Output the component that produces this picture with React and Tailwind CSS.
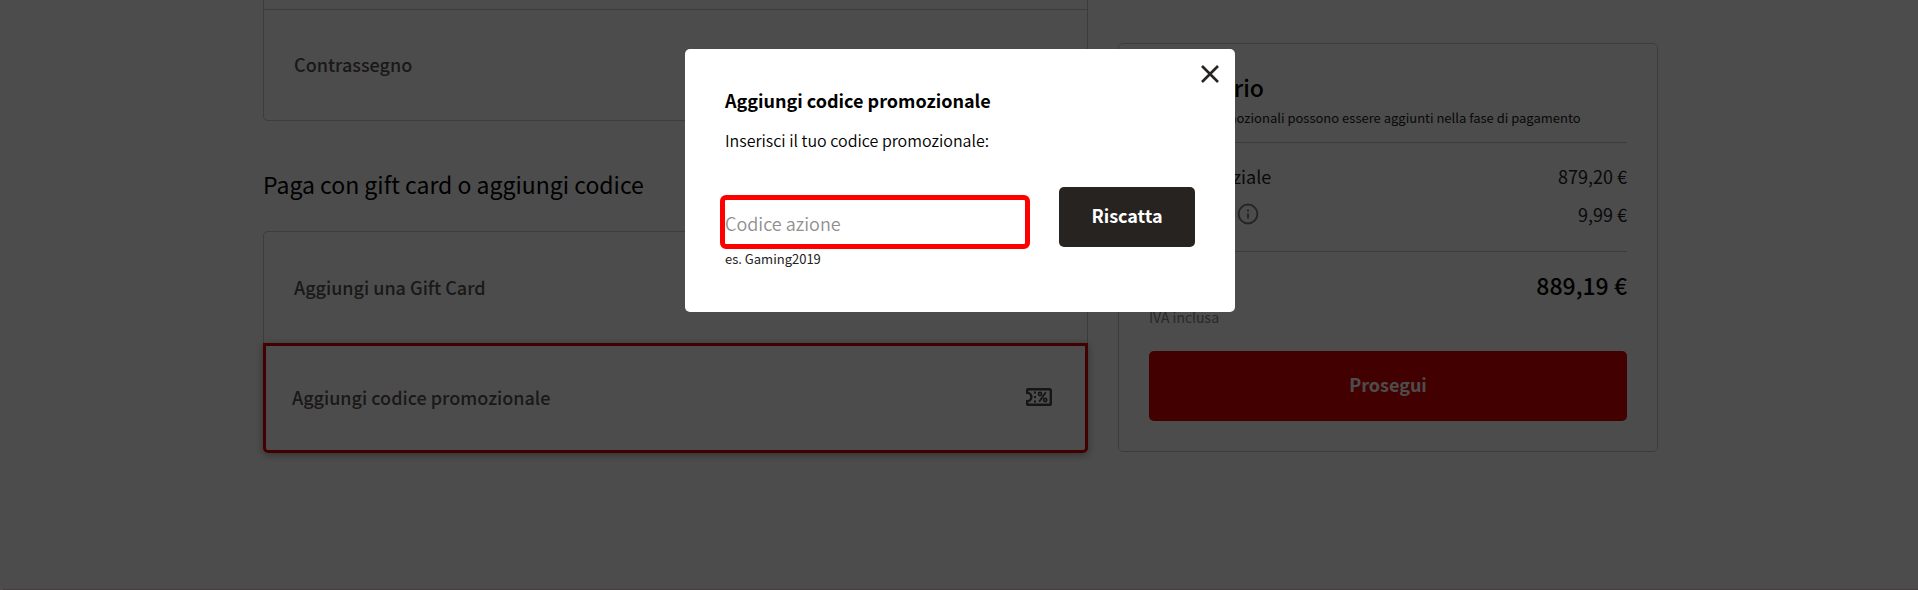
import { useState } from "react"

function TicketIcon() {
  return (
    <svg width="26" height="18" viewBox="0 0 26 18" fill="none" stroke="#4a4643" strokeWidth="2.4">
      <path d="M2 1.2h21.4a1.4 1.4 0 0 1 1.4 1.4v12.8a1.4 1.4 0 0 1-1.4 1.4H2a.8.8 0 0 1-.8-.8v-2.8a4.2 4.2 0 0 0 0-8.4V2a.8.8 0 0 1 .8-.8z" />
      <path d="M9 3.4v2.2M9 7.9v2.2M9 12.4v2.2" strokeWidth="2" />
      <path d="M19.8 4.2l-6.6 9.6" strokeWidth="1.8" />
      <circle cx="14" cy="6" r="1.6" strokeWidth="1.6" />
      <circle cx="19.2" cy="12" r="1.6" strokeWidth="1.6" />
    </svg>
  )
}

function InfoIcon() {
  return (
    <svg width="22" height="22" viewBox="0 0 22 22" fill="none" stroke="#7c7c7c" strokeWidth="2">
      <circle cx="11" cy="11" r="9.4" />
      <path d="M11 6.5v2M11 10.5v5" />
    </svg>
  )
}

function SummaryRow({ label, value }) {
  return (
    <div className="flex h-[38px] items-center justify-between text-lg leading-6 text-[#222]">
      <dt className="flex items-center gap-[5px]">{label}</dt>
      <dd>{value}</dd>
    </div>
  )
}

function Checkout() {
  return (
    <main className="mx-auto flex w-full max-w-[1395px] items-start gap-[30px]">
      <div className="flex-1">
        <section className="rounded-b-[5px] border border-t-0 border-[#c8c8c8]">
          <div className="h-[10px] border-b border-[#c8c8c8]" />
          <div className="flex h-[110px] items-center px-[30px] pb-[2px] text-lg leading-6 font-medium text-[#575350]">
            Contrassegno
          </div>
        </section>
        <h2 className="mt-[47px] mb-[31px] text-[23px] leading-8">Paga con gift card o aggiungi codice</h2>
        <section>
          <button className="flex h-[112px] w-full items-center rounded-t-[5px] border border-b-0 border-[#c8c8c8] px-[30px] pb-[2px] text-lg leading-6 font-medium text-[#575350]">
            Aggiungi una Gift Card
          </button>
          <button className="flex h-[110px] w-full items-center justify-between rounded-b-[5px] border-[3px] border-[#df0000] pr-[33px] pb-[2px] pl-[26px] text-lg leading-6 font-medium text-[#575350] shadow-[0_2px_8px_rgba(0,0,0,0.35)]">
            Aggiungi codice promozionale
            <TicketIcon />
          </button>
        </section>
      </div>

      <aside className="mt-[43px] w-[540px] rounded-[5px] border border-[#c8c8c8] px-[30px] pt-[27px] pb-[30px]">
        <h2 className="text-[23px] leading-8 font-medium">Sommario</h2>
        <p className="mt-[3px] mb-3 text-[13px] leading-6 text-[#222]">
          * I codici promozionali possono essere aggiunti nella fase di pagamento
        </p>
        <dl className="border-y border-[#c8c8c8] pt-[14px] pb-[18px]">
          <SummaryRow label="Totale parziale" value="879,20 €" />
          <SummaryRow
            label={
              <>
                Consegna <InfoIcon />
              </>
            }
            value="9,99 €"
          />
        </dl>
        <div className="mt-[17px] flex items-center justify-between text-[23px] leading-8 font-medium">
          <span>Totale</span>
          <span>889,19 €</span>
        </div>
        <p className="mb-[22px] pt-1 text-sm leading-6 text-[#8a8a8a]">IVA inclusa</p>
        <button className="h-[70px] w-full rounded-[5px] bg-[#df0000] pb-1 text-lg font-bold text-white">
          Prosegui
        </button>
      </aside>
    </main>
  )
}

function PromoDialog() {
  const [code, setCode] = useState("")

  return (
    <div
      role="dialog"
      aria-modal="true"
      aria-labelledby="promo-title"
      className="relative h-[263px] w-[550px] rounded-[5px] bg-white px-10 pt-[39px]"
    >
      <button aria-label="Chiudi" className="absolute top-4 right-4">
        <svg width="18" height="18" viewBox="0 0 18 18" stroke="#272320" strokeWidth="2.6">
          <path d="M1 1l16 16M17 1L1 17" />
        </svg>
      </button>
      <h1 id="promo-title" className="text-lg leading-6 font-bold">
        Aggiungi codice promozionale
      </h1>
      <label htmlFor="promo-code" className="mt-4 block text-base leading-6 font-[350]">
        Inserisci il tuo codice promozionale:
      </label>
      <form className="mt-[35px] flex gap-[34px]" onSubmit={(e) => e.preventDefault()}>
        <div className="flex-1 pt-[13px]">
          <input
            id="promo-code"
            value={code}
            onChange={(e) => setCode(e.target.value)}
            placeholder="Codice azione"
            className="block h-11 w-full rounded-[1px] pt-[2px] text-lg font-[350] outline-[5px] outline-[#f00] outline-solid placeholder:text-[#8f8f8f]"
          />
          <p className="mt-[3px] text-[13px] leading-6 text-[#222]">es. Gaming2019</p>
        </div>
        <button className="h-[60px] w-[136px] rounded-[5px] bg-[#272320] pb-1 text-lg font-bold text-white">
          Riscatta
        </button>
      </form>
    </div>
  )
}

export default function App() {
  return (
    <div className="flex min-h-screen flex-col justify-between bg-white pl-[3px] font-['Noto_Sans_CJK_JP',sans-serif] text-black">
      <Checkout />
      <footer className="border-t border-[#e8c8cc]" />
      <div className="fixed inset-0 flex items-start justify-center bg-black/70 pt-[49px] pl-[2px]">
        <PromoDialog />
      </div>
    </div>
  )
}
